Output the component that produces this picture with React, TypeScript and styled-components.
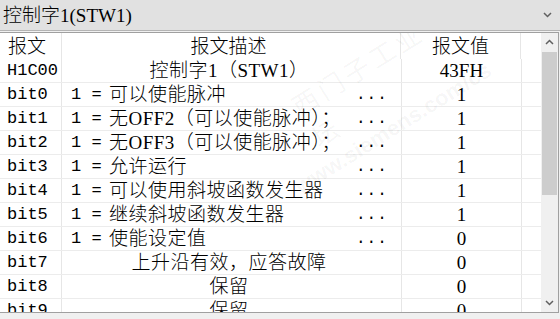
import React from "react";
import styled, { createGlobalStyle } from "styled-components";

interface Row {
  bit: string;
  prefix?: string;
  text: string;
  dots?: boolean;
  center?: boolean;
  value: string;
}

const rows: Row[] = [
  { bit: "H1C00", text: "控制字1（STW1）", center: true, value: "43FH" },
  { bit: "bit0", prefix: "1 =", text: "可以使能脉冲", dots: true, value: "1" },
  { bit: "bit1", prefix: "1 =", text: "无OFF2（可以使能脉冲）；", dots: true, value: "1" },
  { bit: "bit2", prefix: "1 =", text: "无OFF3（可以使能脉冲）；", dots: true, value: "1" },
  { bit: "bit3", prefix: "1 =", text: "允许运行", dots: true, value: "1" },
  { bit: "bit4", prefix: "1 =", text: "可以使用斜坡函数发生器", dots: true, value: "1" },
  { bit: "bit5", prefix: "1 =", text: "继续斜坡函数发生器", dots: true, value: "1" },
  { bit: "bit6", prefix: "1 =", text: "使能设定值", dots: true, value: "0" },
  { bit: "bit7", text: "上升沿有效，应答故障", center: true, value: "0" },
  { bit: "bit8", text: "保留", center: true, value: "0" },
  { bit: "bit9", text: "保留", center: true, value: "0" },
];

// Latin in a serif face, Chinese falls through to Noto CJK
const TEXT = `"Liberation Serif", "Noto Sans CJK SC", serif`;
const MONO = `"Liberation Mono", "Noto Sans CJK SC", monospace`;

const Chevron = ({ up }: { up?: boolean }) => (
  <svg width="9" height="6" viewBox="0 0 9 6">
    <path
      d={up ? "M1 5 L4.5 1.5 L8 5" : "M1 1 L4.5 4.5 L8 1"}
      fill="none"
      stroke="#606060"
      strokeWidth="1.5"
    />
  </svg>
);

const App = () => (
  <>
    <GlobalStyle />
    <TopBar>
      <Title>控制字1(STW1)</Title>
      <Chevron />
    </TopBar>
    <ListBox>
      <TableArea>
        <HeaderRow>
          <HeadCell>报文</HeadCell>
          <DescCell $center>报文描述</DescCell>
          <ValueCell>报文值</ValueCell>
          <Spare />
        </HeaderRow>
        {rows.map((r) => (
          <BodyRow key={r.bit}>
            <BitCell>{r.bit}</BitCell>
            <DescCell $center={r.center}>
              {r.prefix && <Prefix>{r.prefix}</Prefix>}
              <DescText $center={r.center}>{r.text}</DescText>
              {r.dots && <Dots>...</Dots>}
            </DescCell>
            <ValueCell>{r.value}</ValueCell>
            <Spare />
          </BodyRow>
        ))}
        <Watermark>
          <span>西门子工业 技术论坛</span>
          <span>www.siemens.com/cs</span>
        </Watermark>
      </TableArea>
      <ScrollBar>
        <ArrowButton>
          <Chevron up />
        </ArrowButton>
        <Track>
          <Thumb />
        </Track>
        <ArrowButton>
          <Chevron />
        </ArrowButton>
      </ScrollBar>
    </ListBox>
  </>
);

const GlobalStyle = createGlobalStyle`
  html, body {
    margin: 0;
    padding: 0;
    background: #f0f0f0;
    width: 560px;
    height: 319px;
    overflow: hidden;
  }
`;

const TopBar = styled.div`
  height: 31px;
  box-sizing: border-box;
  background: #e1e1e1;
  border-bottom: 1px solid #b4b4b4;
  display: flex;
  align-items: center;
  justify-content: space-between;
  padding: 0 8px 0 3px;
`;

const Title = styled.span`
  font-family: ${TEXT};
  font-size: 19px;
  font-weight: 300;
  color: #000;
  line-height: 1;
`;

const ListBox = styled.div`
  margin-top: 1px;
  width: 559px;
  height: 281px;
  box-sizing: border-box;
  border: 1px solid #a0a0a0;
  border-left: none;
  background: #fff;
  display: flex;
  overflow: hidden;
`;

const TableArea = styled.div`
  position: relative;
  flex: 1;
  overflow: hidden;
`;

const HeaderRow = styled.div`
  display: grid;
  grid-template-columns: 62px 339px 120px 20px;
  height: 26px;
`;

const BodyRow = styled.div`
  display: grid;
  grid-template-columns: 62px 340px 120px 19px;
  height: 24px;
  box-sizing: border-box;
  border-bottom: 1px solid #ececec;
`;

const Cell = styled.div`
  border-right: 1px solid #e6e6e6;
  display: flex;
  align-items: center;
  color: #000;
  white-space: nowrap;
  line-height: 1;
  font-weight: 300;
`;

const BitCell = styled(Cell)`
  padding-left: 7px;
  font-family: ${MONO};
  font-size: 17px;
  font-weight: 400;
`;

const HeadCell = styled(Cell)`
  padding-left: 8px;
  font-family: ${TEXT};
  font-size: 19px;
`;

const DescCell = styled(Cell)<{ $center?: boolean }>`
  padding: 0 14px 0 9px;
  justify-content: ${(p) => (p.$center ? "center" : "flex-start")};
  font-family: ${TEXT};
  font-size: 19px;
`;

const Prefix = styled.span`
  width: 38px;
  flex: none;
  font-family: ${MONO};
  font-size: 17px;
  font-weight: 400;
`;

const DescText = styled.span<{ $center?: boolean }>`
  flex: ${(p) => (p.$center ? "none" : "1")};
  font-family: ${TEXT};
  font-size: 19px;
  letter-spacing: 0.5px;
`;

const Dots = styled.span`
  font-family: ${MONO};
  font-size: 16px;
  font-weight: 400;
  letter-spacing: 1px;
  width: 31px;
`;

const ValueCell = styled(Cell)`
  justify-content: center;
  font-family: ${TEXT};
  font-size: 19px;
`;

const Spare = styled(Cell)`
  border-right: none;
`;

const Watermark = styled.div`
  position: absolute;
  left: 250px;
  top: 80px;
  display: flex;
  flex-direction: column;
  gap: 2px;
  transform: rotate(-32deg);
  transform-origin: left top;
  font-family: "Noto Sans CJK SC", sans-serif;
  color: rgba(0, 0, 0, 0.045);
  pointer-events: none;
  span:first-child {
    font-size: 26px;
    letter-spacing: 4px;
    padding-left: 40px;
  }
  span:last-child {
    font-family: "Liberation Sans", sans-serif;
    font-size: 22px;
    font-weight: bold;
  }
`;

const ScrollBar = styled.div`
  width: 17px;
  background: #f0f0f0;
  display: flex;
  flex-direction: column;
`;

const ArrowButton = styled.div`
  height: 18px;
  display: flex;
  align-items: center;
  justify-content: center;
`;

const Track = styled.div`
  flex: 1;
  padding: 1px 1px 0;
`;

const Thumb = styled.div`
  height: 143px;
  background: #cdcdcd;
`;

export default App;
